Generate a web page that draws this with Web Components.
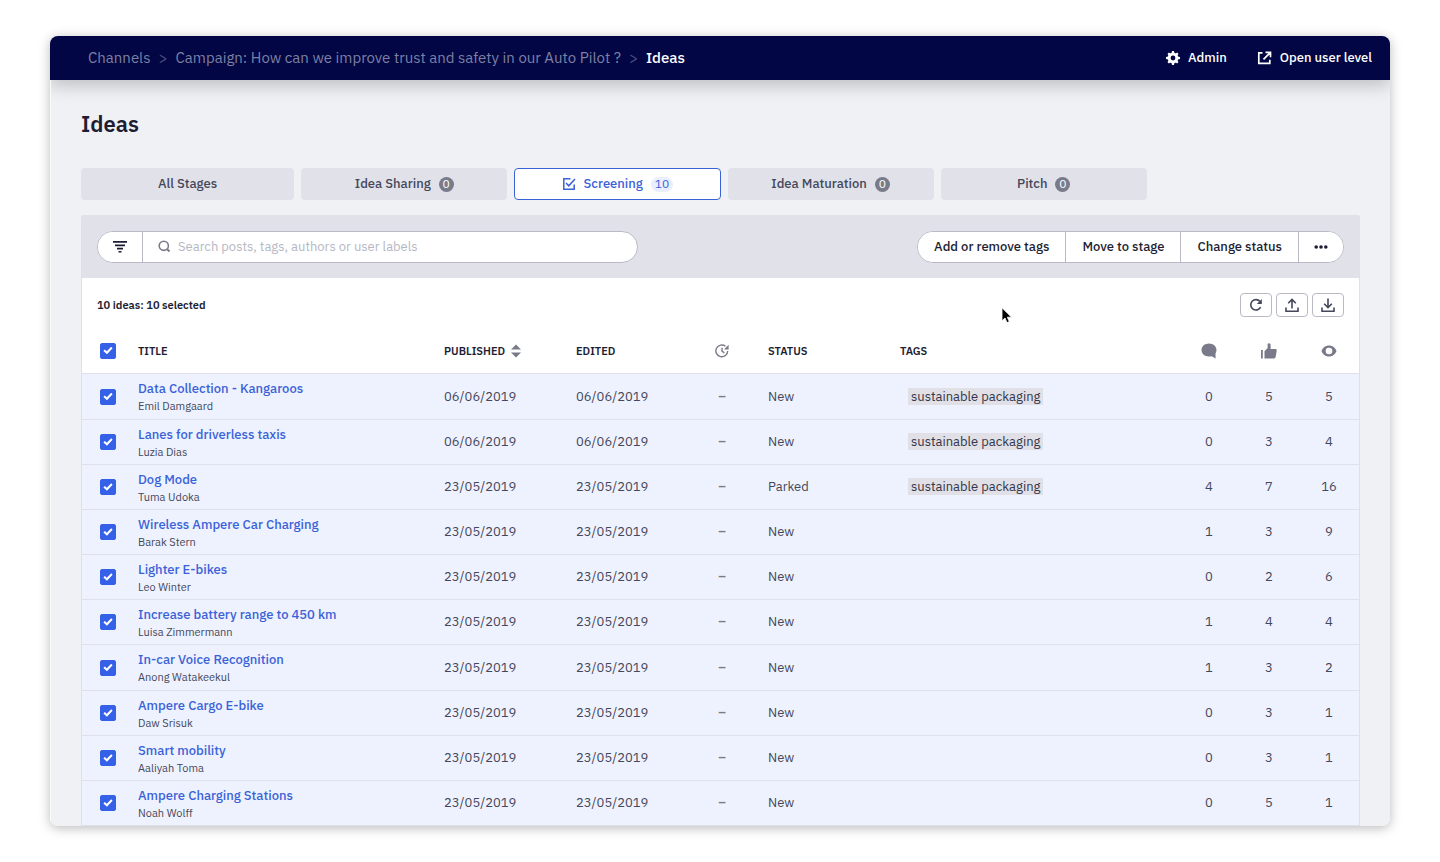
<!DOCTYPE html>
<html lang="en">
<head>
<meta charset="utf-8">
<meta name="viewport" content="width=device-width, initial-scale=1">
<title>Ideas</title>
<style>
  html, body { margin: 0; background: #fff; }
  body {
    font-family: "IBM Plex Sans", "Noto Sans", "Open Sans", sans-serif;
    font-size: 13px;
    line-height: 20px;
    color: #45475a;
  }
</style>
</head>
<body>
<idea-app></idea-app>

<template id="tpl-app">
  <style>
    :host { display: block; box-sizing: border-box; min-height: 100vh; padding: 36px 50px; }
    .window {
      position: relative;
      display: flex;
      flex-direction: column;
      box-sizing: border-box;
      min-height: calc(100vh - 72px);
      border-radius: 8px;
      overflow: hidden;
      background: #f0f1f5;
    }
    .shade { border-radius: 8px; box-shadow: 0 2px 12px rgba(0, 0, 0, .28); }
    main { display: flex; flex-direction: column; flex: 1; padding: 0 30px; border-left: 1px solid #fafafc; }
    h1 { margin: 29px 0 29px; font-size: 22px; line-height: 30px; font-weight: 600; color: #1d1d33; }
    nav { display: grid; grid-template-columns: 213fr repeat(5, 206fr); gap: 7px; margin-bottom: 15px; }
    .panel {
      display: flex;
      flex-direction: column;
      flex: 1;
      background: #fff;
      border: 1px solid #dfe0e9;
      border-width: 0 1px;
      border-radius: 3px 3px 0 0;
    }
    .count-row { display: flex; align-items: center; justify-content: space-between; height: 24px; padding: 15px 15px 0; }
    .count-row p { margin: 0; font-size: 11px; font-weight: 600; color: #1d1d33; }
    .tools { display: flex; gap: 4px; }
    .tools button {
      display: grid;
      place-items: center;
      width: 32px;
      height: 24px;
      padding: 0;
      border: 1px solid #b9bac6;
      border-radius: 4px;
      background: #fff;
      color: #45475a;
    }
    .cursor { position: absolute; left: 951px; top: 271px; }
  </style>
  <div class="shade"><div class="window">
    <top-bar></top-bar>
    <main>
      <h1>Ideas</h1>
      <nav aria-label="Stages">
        <stage-tab>All Stages</stage-tab>
        <stage-tab count="0">Idea Sharing</stage-tab>
        <stage-tab count="10" active>Screening</stage-tab>
        <stage-tab count="0">Idea Maturation</stage-tab>
        <stage-tab count="0">Pitch</stage-tab>
      </nav>
      <section class="panel">
        <tool-bar></tool-bar>
        <div class="count-row">
          <p>10 ideas: 10 selected</p>
          <div class="tools">
            <button type="button" aria-label="Refresh"><ui-icon name="refresh"></ui-icon></button>
            <button type="button" aria-label="Upload"><ui-icon name="upload"></ui-icon></button>
            <button type="button" aria-label="Download"><ui-icon name="download"></ui-icon></button>
          </div>
        </div>
        <idea-table></idea-table>
      </section>
    </main>
    <ui-icon class="cursor" name="pointer"></ui-icon>
  </div></div>
</template>

<template id="tpl-bar">
  <style>
    :host {
      display: flex;
      align-items: center;
      justify-content: space-between;
      height: 44px;
      padding: 0 18px 0 38px;
      background: #020644;
      box-shadow: 0 5px 18px rgba(0, 0, 0, .22);
      font-size: 15px;
    }
    ol { display: flex; gap: 8px; margin: 0; padding: 0; list-style: none; white-space: nowrap; }
    a { color: #7d80a3; text-decoration: none; }
    .sep { color: #4c5080; }
    .here { color: #fff; font-weight: 500; }
    .links { display: flex; gap: 30px; font-size: 13px; font-weight: 500; white-space: nowrap; }
    .links a { display: flex; align-items: center; gap: 8px; color: #fff; }
  </style>
  <ol aria-label="Breadcrumb">
    <li><a href="#channels">Channels</a></li>
    <li class="sep" aria-hidden="true">&gt;</li>
    <li><a href="#campaign">Campaign: How can we improve trust and safety in our Auto Pilot ?</a></li>
    <li class="sep" aria-hidden="true">&gt;</li>
    <li><a class="here" href="#ideas">Ideas</a></li>
  </ol>
  <div class="links">
    <a href="#admin"><ui-icon name="gear"></ui-icon>Admin</a>
    <a href="#user"><ui-icon name="open"></ui-icon>Open user level</a>
  </div>
</template>

<template id="tpl-tab">
  <style>
    :host { display: block; }
    button {
      display: flex;
      align-items: center;
      justify-content: center;
      width: 100%;
      height: 32px;
      padding: 0;
      border: 1px solid transparent;
      border-radius: 4px;
      background: #e0e1e9;
      color: #45475a;
      font: inherit;
      font-weight: 500;
    }
    ui-icon { display: none; margin-right: 8px; }
    .count {
      height: 15px;
      min-width: 15px;
      box-sizing: border-box;
      margin-left: 8px;
      border-radius: 8px;
      background: #7a7b8a;
      color: #fff;
      font-size: 12px;
      line-height: 14px;
      font-weight: 400;
      text-align: center;
    }
    .count[hidden] { display: none; }
    :host([active]) button { background: #fff; border-color: #3a62d8; color: #3a62d8; }
    :host([active]) ui-icon { display: block; }
    :host([active]) .count { background: #ebeffd; color: #3a62d8; padding: 0 4px; }
  </style>
  <button type="button"><ui-icon name="check-box"></ui-icon><slot></slot><span class="count"></span></button>
</template>

<template id="tpl-toolbar">
  <style>
    :host {
      display: flex;
      align-items: center;
      justify-content: space-between;
      height: 63px;
      padding: 0 15px;
      background: #e0e1e9;
    }
    .group {
      display: flex;
      box-sizing: border-box;
      height: 32px;
      border: 1px solid #b9bac6;
      border-radius: 16px;
      background: #fff;
      overflow: hidden;
    }
    .search { flex: 0 1 541px; }
    button {
      display: grid;
      place-items: center;
      padding: 0 16px;
      border: 0;
      background: #fff;
      color: #1d1d33;
      font: inherit;
      font-weight: 500;
      white-space: nowrap;
    }
    button + button { border-left: 1px solid #b9bac6; }
    .icon-only { padding: 0 15px; }
    label { display: flex; flex: 1; align-items: center; gap: 7px; padding-left: 15px; border-left: 1px solid #b9bac6; color: #7a7b8a; }
    input { flex: 1; min-width: 0; padding: 0; border: 0; outline: 0; background: none; font: inherit; color: #1d1d33; }
    input::placeholder { color: #b6b7c4; opacity: 1; }
  </style>
  <div class="group search">
    <button class="icon-only" type="button" aria-label="Filter"><ui-icon name="filter"></ui-icon></button>
    <label><ui-icon name="search"></ui-icon><input type="text" aria-label="Search" placeholder="Search posts, tags, authors or user labels"></label>
  </div>
  <div class="group">
    <button type="button">Add or remove tags</button>
    <button type="button">Move to stage</button>
    <button type="button">Change status</button>
    <button class="icon-only" type="button" aria-label="More"><ui-icon name="dots"></ui-icon></button>
  </div>
</template>

<template id="tpl-table">
  <style>
    :host { display: block; padding-top: 11px; }
    table { width: 100%; table-layout: fixed; border-collapse: separate; border-spacing: 0; }
    .c-check { width: 40px; }
    .c-text { width: 132px; }
    .c-tags { width: 295px; }
    .c-num { width: 60px; }
    th, td { box-sizing: border-box; padding: 0 0 0 16px; border-bottom: 1px solid #dfe0e9; text-align: left; }
    th { height: 46px; font-size: 11px; font-weight: 600; color: #1d1d33; }
    td { height: 45px; background: #eef2fe; }
    tbody tr:nth-child(6n + 1) td { height: 46px; }
    .check { padding-left: 18px; }
    .num { padding: 0; text-align: center; }
    .num ui-icon { margin: 0 auto; color: #7a7b8a; }
    .sort { display: flex; align-items: center; gap: 6px; padding: 0; border: 0; background: none; font: inherit; color: inherit; }
    .sort ui-icon { color: #7a7b8a; }
    .dash { font-weight: 600; color: #7a7b8a; }
    a { display: block; padding-top: 1px; line-height: 18px; font-weight: 500; color: #3a62d8; text-decoration: none; white-space: nowrap; }
    .author { display: block; font-size: 11px; line-height: 16px; }
    .tag { display: inline-block; margin-left: 8px; padding: 0 3px; line-height: 17px; background: #e0e0e6; color: #33354a; white-space: nowrap; }
    input {
      display: grid;
      place-items: center;
      appearance: none;
      width: 16px;
      height: 16px;
      margin: 0;
      border: 1px solid #9fa1b0;
      border-radius: 2px;
    }
    input:checked { border-color: #3561e8; background: #3561e8; }
    input:checked::before {
      content: "";
      width: 10px;
      height: 8px;
      background: #fff;
      clip-path: polygon(4% 56%, 18% 38%, 38% 60%, 82% 4%, 96% 22%, 40% 96%);
    }
  </style>
  <table>
    <colgroup>
      <col class="c-check"><col><col class="c-text"><col class="c-text"><col class="c-num">
      <col class="c-text"><col class="c-tags"><col class="c-num"><col class="c-num"><col class="c-num">
    </colgroup>
    <thead>
      <tr>
        <th class="check"><input type="checkbox" checked aria-label="Select all ideas"></th>
        <th>TITLE</th>
        <th><button class="sort" type="button">PUBLISHED<ui-icon name="sort"></ui-icon></button></th>
        <th>EDITED</th>
        <th class="num" aria-label="Deadline"><ui-icon name="clock"></ui-icon></th>
        <th>STATUS</th>
        <th>TAGS</th>
        <th class="num" aria-label="Comments"><ui-icon name="comment"></ui-icon></th>
        <th class="num" aria-label="Likes"><ui-icon name="like"></ui-icon></th>
        <th class="num" aria-label="Views"><ui-icon name="eye"></ui-icon></th>
      </tr>
    </thead>
    <tbody></tbody>
  </table>
</template>

<script>
  const line = 'fill="none" stroke="currentColor"';
  const ICONS = {
    gear: [14, 14, '<g fill="currentColor"><path fill-rule="evenodd" d="M7 1.6a5.4 5.4 0 1 0 0 10.8A5.4 5.4 0 0 0 7 1.6Zm0 3a2.4 2.4 0 1 1 0 4.8 2.4 2.4 0 0 1 0-4.8Z"/><path d="M5.6 2.4 6 0h2l.4 2.4zM5.600 11.600 6 14h2l.4-2.400zM2.400 5.600 0 6v2l2.400.4zM11.600 5.600 14 6v2l-2.400.4zM3 4.900 1.500 2.900l1.400-1.400 2 1.500zM9.100 3l2-1.500 1.400 1.400L11 4.900zM11 9.100l1.500 2-1.400 1.400-2-1.500zM4.900 11l-2 1.500-1.400-1.400 1.500-2z"/></g>'],
    open: [15, 14, `<path ${line} stroke-width="1.700" d="M5.500 1.800H1.800v10.500h11V8.800M8.500 1.300h5v5M13.200 1.600 6.500 8.300"/>`],
    'check-box': [14, 14, `<path ${line} stroke-width="1.500" d="M8.500 1.800H1.800v10.400h10.400V7.500M4 6l2.800 2.800L13 2"/>`],
    filter: [14, 13, '<path fill="currentColor" d="M0 1h14v1.800H0zM2 4.400h10v1.800H2zM4 7.800h6v1.800H4zM5.500 11h3v1.500h-3z"/>'],
    search: [13, 13, `<circle cx="5.800" cy="5.800" r="4.600" ${line} stroke-width="1.600"/><path ${line} stroke-width="2" d="m9 9 2.500 2.500"/>`],
    dots: [14, 4, '<g fill="currentColor"><circle cx="2.200" cy="2" r="1.800"/><circle cx="7" cy="2" r="1.800"/><circle cx="11.800" cy="2" r="1.800"/></g>'],
    refresh: [14, 14, `<path ${line} stroke-width="1.600" d="M11.600 9.200A5.200 5.200 0 1 1 11 3.500"/><path fill="currentColor" d="M12.800 1v5H7.800z"/>`],
    upload: [14, 14, `<path ${line} stroke-width="1.600" d="M1 9.500v3.700h12V9.500M7 10.500V1.500M3.200 5.300 7 1.500l3.800 3.800"/>`],
    download: [14, 14, `<path ${line} stroke-width="1.600" d="M1 9.500v3.700h12V9.500M7 .500v9M3.200 5.800 7 9.600l3.800-3.800"/>`],
    sort: [10, 14, '<path fill="currentColor" d="M5 .500l5 5H0zM5 13.500l5-5H0z"/>'],
    clock: [14, 14, `<path ${line} stroke-width="1.400" d="M12.700 7A5.900 5.900 0 1 1 10.500 2.300M7 3.800V7.200l2.400 1.600"/><path fill="currentColor" d="M13.600.800v4.600H9z"/>`],
    comment: [16, 16, '<path fill="currentColor" d="M8 .500C3.900.500.500 3.300.500 7S3.700 13.500 8 13.500c.9 0 1.900-.1 2.700-.3l3.900 2.300-.1-5c.6-1 1-2.200 1-3.500C15.500 3.300 12 .500 8 .500Z"/>'],
    like: [16, 16, '<path fill="currentColor" d="M0 7h1.800v8.500H0zM3.500 8.200 6.600 5V1.800C6.600.800 7.300.300 8.100.300c1 0 1.500.800 1.500 1.700V6h4.800c1 0 1.500.8 1.300 1.800l-1 6c-.2 1-.9 1.700-1.900 1.700H3.500z"/>'],
    eye: [16, 12, '<path fill="currentColor" fill-rule="evenodd" d="M8 .500C4.500.500 1.700 2.700.500 6 1.700 9.300 4.500 11.500 8 11.500s6.300-2.200 7.500-5.500C14.300 2.700 11.500.500 8 .500Zm0 2.200a3.300 3.300 0 1 1 0 6.600 3.300 3.300 0 0 1 0-6.600Z"/>'],
    pointer: [12, 18, '<path fill="#000" stroke="#fff" stroke-width=".8" d="M1 .800v13l3-2.800 2 4.600 2.300-1-2-4.400h4.200z"/>']
  };

  class UiIcon extends HTMLElement {
    connectedCallback() {
      if (this.shadowRoot) return;
      const [w, h, body] = ICONS[this.getAttribute('name')];
      this.attachShadow({ mode: 'open' }).innerHTML =
        `<style>:host { display: block; flex: none; width: ${w}px; height: ${h}px; } svg { display: block; }</style>
         <svg width="${w}" height="${h}" viewBox="0 0 ${w} ${h}" aria-hidden="true">${body}</svg>`;
    }
  }

  const fromTemplate = id => class extends HTMLElement {
    constructor() {
      super();
      this.attachShadow({ mode: 'open' })
        .append(document.getElementById(id).content.cloneNode(true));
    }
  };

  class StageTab extends fromTemplate('tpl-tab') {
    connectedCallback() {
      const badge = this.shadowRoot.querySelector('.count');
      badge.hidden = !this.hasAttribute('count');
      badge.textContent = this.getAttribute('count') || '';
    }
  }

  const PACK = 'sustainable packaging';
  const IDEAS = [
    ['Data Collection - Kangaroos', 'Emil Damgaard', '06/06/2019', 'New', PACK, 0, 5, 5],
    ['Lanes for driverless taxis', 'Luzia Dias', '06/06/2019', 'New', PACK, 0, 3, 4],
    ['Dog Mode', 'Tuma Udoka', '23/05/2019', 'Parked', PACK, 4, 7, 16],
    ['Wireless Ampere Car Charging', 'Barak Stern', '23/05/2019', 'New', '', 1, 3, 9],
    ['Lighter E-bikes', 'Leo Winter', '23/05/2019', 'New', '', 0, 2, 6],
    ['Increase battery range to 450 km', 'Luisa Zimmermann', '23/05/2019', 'New', '', 1, 4, 4],
    ['In-car Voice Recognition', 'Anong Watakeekul', '23/05/2019', 'New', '', 1, 3, 2],
    ['Ampere Cargo E-bike', 'Daw Srisuk', '23/05/2019', 'New', '', 0, 3, 1],
    ['Smart mobility', 'Aaliyah Toma', '23/05/2019', 'New', '', 0, 3, 1],
    ['Ampere Charging Stations', 'Noah Wolff', '23/05/2019', 'New', '', 0, 5, 1]
  ];

  class IdeaTable extends fromTemplate('tpl-table') {
    connectedCallback() {
      this.shadowRoot.querySelector('tbody').innerHTML = IDEAS.map(
        ([title, author, date, status, tag, comments, likes, views]) => `<tr>
          <td class="check"><input type="checkbox" checked aria-label="Select ${title}"></td>
          <td><a href="#idea">${title}</a><span class="author">${author}</span></td>
          <td>${date}</td><td>${date}</td>
          <td class="num dash">–</td>
          <td>${status}</td>
          <td>${tag ? `<span class="tag">${tag}</span>` : ''}</td>
          <td class="num">${comments}</td><td class="num">${likes}</td><td class="num">${views}</td>
        </tr>`).join('');
    }
  }

  customElements.define('ui-icon', UiIcon);
  customElements.define('stage-tab', StageTab);
  customElements.define('top-bar', class extends fromTemplate('tpl-bar') {});
  customElements.define('tool-bar', class extends fromTemplate('tpl-toolbar') {});
  customElements.define('idea-table', IdeaTable);
  customElements.define('idea-app', class extends fromTemplate('tpl-app') {});
</script>
</body>
</html>
